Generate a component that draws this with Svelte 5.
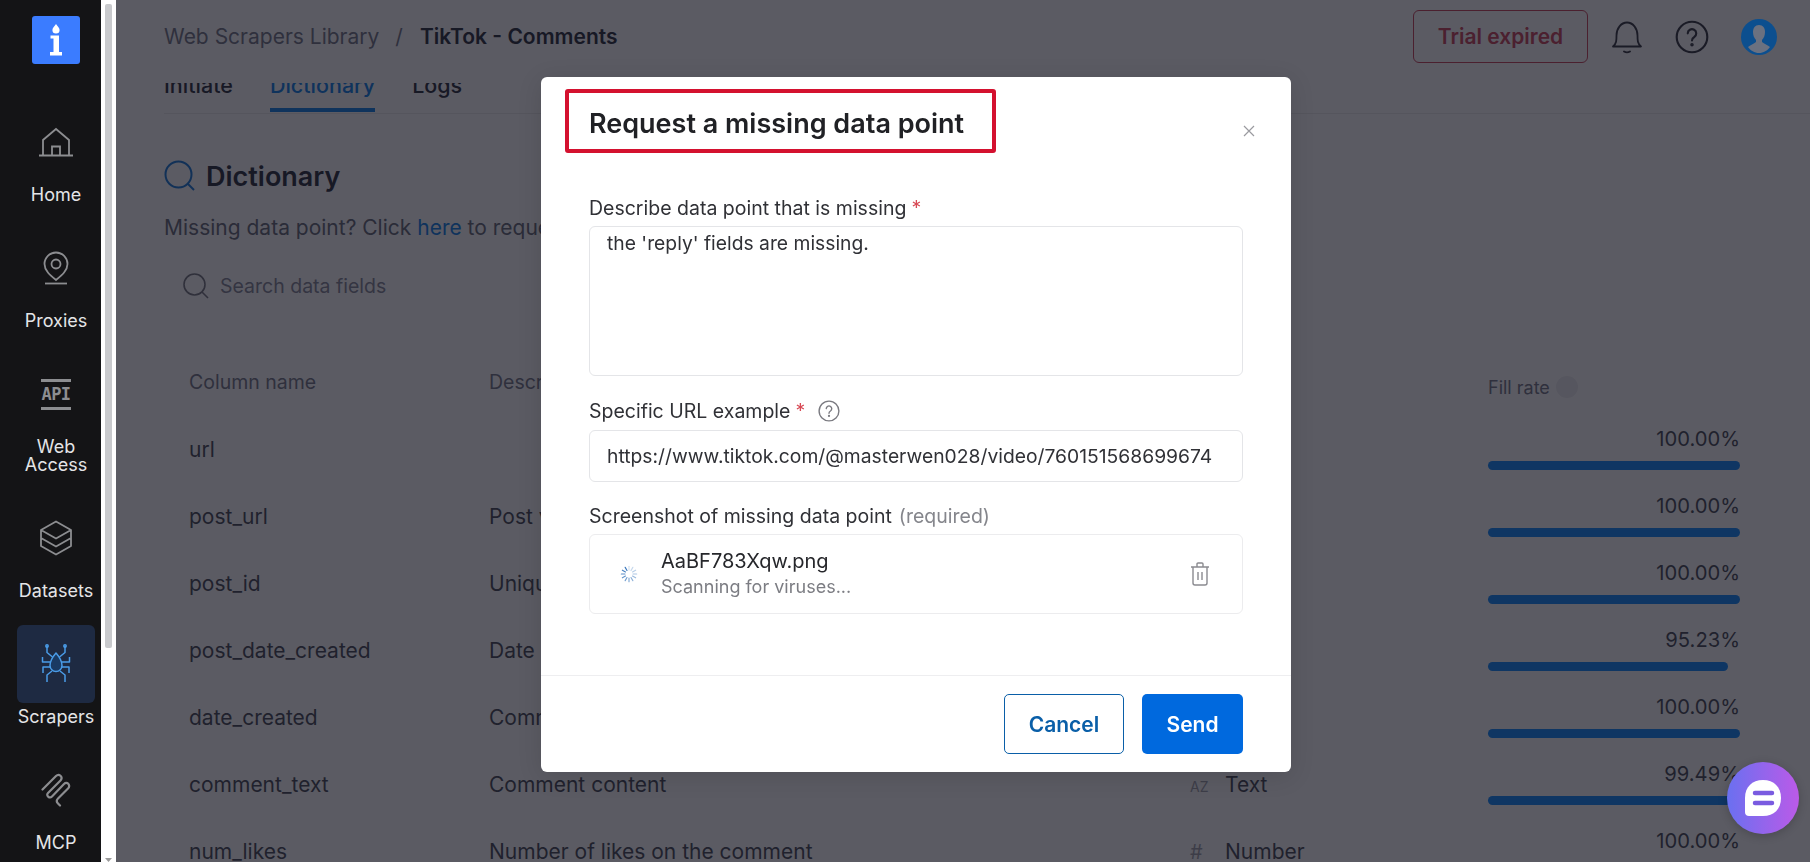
<script lang="ts">
  const rows = [
    { name: 'url', desc: '', type: 'Url', mark: '', fill: 100 },
    { name: 'post_url', desc: 'Post video URL', type: 'Url', mark: '', fill: 100 },
    { name: 'post_id', desc: 'Unique post ID', type: 'Text', mark: 'AZ', fill: 100 },
    { name: 'post_date_created', desc: 'Date created', type: 'Date', mark: '', fill: 95.23 },
    { name: 'date_created', desc: 'Comment date', type: 'Date', mark: '', fill: 100 },
    { name: 'comment_text', desc: 'Comment content', type: 'Text', mark: 'AZ', fill: 99.49 },
    { name: 'num_likes', desc: 'Number of likes on the comment', type: 'Number', mark: '#', fill: 100 },
  ]

  const ticks = Array.from({ length: 12 }, (_, i) => i)
  let reason = $state("the 'reply' fields are missing.")
  let url = $state('https://www.tiktok.com/@masterwen028/video/760151568699674')
</script>

{#snippet help(size)}
  <svg class="help" width={size} height={size} viewBox="0 0 24 24" fill="none" stroke="currentColor" stroke-width="1.5">
    <circle cx="12" cy="12" r="10.8" />
    <path d="M9 9.4a3 3 0 1 1 4.6 2.6c-1 .6-1.6 1.2-1.6 2.4" stroke-linecap="round" />
    <circle cx="12" cy="17.4" r=".5" fill="currentColor" />
  </svg>
{/snippet}

<div class="page">
  <aside class="sidebar">
    <div class="logo">
      <svg width="12" height="32" viewBox="0 0 12 32" fill="#fff">
        <path d="M6 0c.8 1.800 3.600 3.500 3.600 6a3.600 3.600 0 0 1-7.200 0C2.400 3.500 5.200 1.800 6 0z" />
        <path d="M.5 11.500h8.500v16.500H12v3.500H0V28h3.500V14.500H.5z" />
      </svg>
    </div>
    <nav class="nav">
      <a class="nav-item">
        <span class="nav-icon">
          <svg width="36" height="30" viewBox="0 0 36 30" fill="none" stroke="#8c8d90" stroke-width="1.800">
            <path d="M1 28.500h34M5 28.500V13L18 2l13 11v15.500M14 28.500v-9h8v9" />
          </svg>
        </span>
        <span class="nav-label">Home</span>
      </a>
      <a class="nav-item">
        <span class="nav-icon">
          <svg width="26" height="34" viewBox="0 0 26 34" fill="none" stroke="#8c8d90" stroke-width="1.800">
            <path d="M13 29C7 24 1.500 19.500 1.500 13a11.500 11.500 0 0 1 23 0c0 6.500-5.500 11-11.500 16z" />
            <circle cx="13" cy="13" r="4.500" />
            <path d="M2 32.500h22" />
          </svg>
        </span>
        <span class="nav-label">Proxies</span>
      </a>
      <a class="nav-item">
        <span class="nav-icon">
          <span class="api-mark">API</span>
        </span>
        <span class="nav-label">Web<br />Access</span>
      </a>
      <a class="nav-item">
        <span class="nav-icon">
          <svg width="34" height="36" viewBox="0 0 34 36" fill="none" stroke="#8c8d90" stroke-width="1.800" stroke-linejoin="round">
            <path d="M17 1.500 32 10v16l-15 8.500L2 26V10zM2 10l15 8.500L32 10M2 18l15 8.500L32 18" />
          </svg>
        </span>
        <span class="nav-label">Datasets</span>
      </a>
      <a class="nav-item active">
        <span class="nav-icon">
          <svg width="32" height="40" viewBox="0 0 32 40" fill="none" stroke="#4a9ce8" stroke-width="1.500" stroke-linejoin="round">
            <path d="M16 9c3.500 4 6 8 6 12.500a6 6 0 0 1-12 0C10 17 12.500 13 16 9z" fill="#1a3a63" />
            <path d="M12.500 13 7 8.500V2M19.500 13 25 8.500V2M10 18H2.500v-5M22 18h7.500v-5M10 23H3v6M22 23h7v6M12 27l-5 4v7M20 27l5 4v7" />
            <circle cx="7" cy="2" r="1.200" /><circle cx="25" cy="2" r="1.200" />
          </svg>
        </span>
        <span class="nav-label">Scrapers</span>
      </a>
      <a class="nav-item">
        <span class="nav-icon">
          <svg width="30" height="34" viewBox="0 0 30 34" fill="none" stroke="#8c8d90" stroke-width="2.200" stroke-linecap="round" stroke-linejoin="round">
            <path d="M1.500 16.500 15 3c3-3 7.500 1 4.500 4.500L7 20c-2.500 2.500 1.500 6 4 3.500L23 11c3-3 7 1 4 4.500L17 25.500c-2 2-1.500 3.500 0 5l2 2" />
          </svg>
        </span>
        <span class="nav-label">MCP</span>
      </a>
    </nav>
  </aside>

  <div class="scrollbar"><div class="thumb"></div><span class="arrow"></span></div>

  <main class="main">
    <header class="topbar">
      <div class="crumbs">
        <span class="crumb">Web Scrapers Library</span>
        <span class="sep">/</span>
        <span class="current">TikTok - Comments</span>
      </div>
      <div class="top-actions">
        <button class="trial">Trial expired</button>
        <svg class="bell" width="32" height="34" viewBox="0 0 32 34" fill="none" stroke="#272932" stroke-width="1.800">
          <path d="M2 26.500c3.500-3 3.500-6 3.500-11C5.500 8.500 10 2.500 16 2.500s10.500 6 10.500 13c0 5 0 8 3.500 11z" stroke-linejoin="round" />
          <path d="M13 31.500c2 1.200 4 1.200 6 0" stroke-linecap="round" />
        </svg>
        <span class="top-help">{@render help(34)}</span>
        <span class="avatar">
          <svg width="36" height="36" viewBox="0 0 36 36">
            <circle cx="18" cy="18" r="18" fill="#0c4f8f" />
            <path d="M18 6c4 0 6 3 6 7 0 3-1 6-3 8v2c2 2 6 3 8 5-2.500 3.500-6.500 6-11 6s-8.500-2.500-11-6c2-2 6-3 8-5v-2c-2-2-3-5-3-8 0-4 2-7 6-7z" fill="#6b7180" />
          </svg>
        </span>
      </div>
    </header>

    <div class="tabs">
      <span class="tab">Initiate</span>
      <span class="tab on">Dictionary</span>
      <span class="tab">Logs</span>
    </div>

    <section class="content">
      <h2 class="dict-title">
        <svg width="32" height="32" viewBox="0 0 32 32" fill="none" stroke="#0a72d8" stroke-width="2">
          <circle cx="14.500" cy="14.500" r="13" /><path d="m24 24 6 6" />
        </svg>
        Dictionary
      </h2>
      <p class="missing">Missing data point? Click <a>here</a> to request it</p>
      <div class="search">
        <svg width="26" height="26" viewBox="0 0 26 26" fill="none" stroke="#6e7079" stroke-width="1.600">
          <circle cx="11.500" cy="11.500" r="10.500" /><path d="m19 19 6 6" />
        </svg>
        <span>Search data fields</span>
      </div>

      <div class="table">
        <div class="row head">
          <span>Column name</span>
          <span>Description</span>
          <span>Type</span>
          <span class="fill-head">Fill rate <i class="dot"></i></span>
        </div>
        {#each rows as row}
          <div class="row">
            <span class="name">{row.name}</span>
            <span class="desc">{row.desc}</span>
            <span class="type"><em class:hash={row.mark === '#'}>{row.mark}</em>{row.type}</span>
            <div class="fill">
              <span class="pct">{row.fill.toFixed(2)}%</span>
              <div class="bar" style="width: {row.fill === 95.23 ? 95.23 : 100}%"></div>
            </div>
          </div>
        {/each}
      </div>
    </section>

    <div class="backdrop"></div>
  </main>

  <div class="modal">
    <div class="modal-head">
      <h1 class="modal-title">Request a missing data point</h1>
      <svg class="close" width="14" height="14" viewBox="0 0 14 14" stroke="#9a9a9f" stroke-width="1.200">
        <path d="m2 2 10 10M12 2 2 12" />
      </svg>
    </div>

    <div class="modal-body">
      <label class="field-label">Describe data point that is missing <b>*</b></label>
      <textarea class="reason" bind:value={reason}></textarea>

      <label class="field-label second">Specific URL example <b>*</b> <span class="label-help">{@render help(22)}</span></label>
      <input class="url" bind:value={url} />

      <label class="field-label third">Screenshot of missing data point <span class="req">(required)</span></label>
      <div class="file">
        <svg class="spinner" width="18" height="18" viewBox="0 0 20 20" stroke="#2d6fb8" stroke-width="1.300" stroke-linecap="round">
          {#each ticks as t}
            <path d="M10 1.500v4" transform="rotate({t * 30} 10 10)" opacity={0.2 + (t / 12) * 0.8} />
          {/each}
        </svg>
        <div class="file-text">
          <span class="file-name">AaBF783Xqw.png</span>
          <span class="file-status">Scanning for viruses...</span>
        </div>
        <svg class="trash" width="20" height="24" viewBox="0 0 20 24" fill="none" stroke="#8b8b90" stroke-width="1.400">
          <path d="M1 5h18M7 5V2a1 1 0 0 1 1-1h4a1 1 0 0 1 1 1v3M3 5v16a2 2 0 0 0 2 2h10a2 2 0 0 0 2-2V5M8 10v8M12 10v8" />
        </svg>
      </div>
    </div>

    <div class="modal-foot">
      <button class="btn cancel">Cancel</button>
      <button class="btn send">Send</button>
    </div>
  </div>

  <div class="chat">
    <svg width="38" height="38" viewBox="0 0 38 38">
      <path d="M19 1c11 0 18 7 18 18s-7 18-18 18H5c-2.500 0-4-1.500-4-4V19C1 8 8 1 19 1z" fill="#fff" />
      <path d="M11 14h17M11 24h17" stroke="#7a5be0" stroke-width="4.500" stroke-linecap="round" />
    </svg>
  </div>
</div>

<style>
  :global(body) {
    margin: 0;
    overflow: hidden;
    font-family: Inter, "Liberation Sans", sans-serif;
  }

  .page {
    display: flex;
    height: 100vh;
    overflow: hidden;
    background: #fff;
  }

  .sidebar {
    width: 101px;
    flex-shrink: 0;
    background: #141416;
    display: flex;
    flex-direction: column;
    align-items: center;
    padding: 16px 0 0 11px;
    box-sizing: border-box;
    overflow: hidden;
  }

  .logo {
    width: 48px;
    height: 48px;
    flex-shrink: 0;
    border-radius: 3px;
    background: #3b7cff;
    display: flex;
    align-items: center;
    justify-content: center;
  }

  .nav {
    margin-top: 39px;
    display: flex;
    flex-direction: column;
    gap: 25px;
  }

  .nav-item {
    display: flex;
    flex-direction: column;
    align-items: center;
    gap: 5px;
    color: #e4e5e7;
    font-size: 18px;
    line-height: 18px;
    text-align: center;
  }

  .nav-icon {
    width: 78px;
    height: 78px;
    border-radius: 6px;
    display: flex;
    align-items: center;
    justify-content: center;
  }

  .nav-item.active .nav-icon {
    background: #1e2a42;
  }

  .api-mark {
    width: 30px;
    border-top: 3px solid #8c8d90;
    border-bottom: 3px solid #8c8d90;
    color: #8c8d90;
    font-family: "DejaVu Sans Mono", monospace;
    font-weight: 700;
    font-size: 17px;
    line-height: 25px;
    letter-spacing: -0.5px;
    text-align: center;
  }

  .scrollbar {
    width: 15px;
    flex-shrink: 0;
    background: #fff;
    position: relative;
  }

  .thumb {
    width: 7px;
    height: 644px;
    margin: 4px 0 0 4px;
    border-radius: 2px;
    background: #c9cacd;
  }

  .arrow {
    position: absolute;
    left: 4px;
    bottom: 0;
    width: 7px;
    height: 4px;
    background: #9a9a9a;
    clip-path: polygon(0 0, 100% 0, 50% 100%);
  }

  .main {
    flex: 1;
    min-width: 0;
    position: relative;
    background: #fff;
    padding: 0 0 0 48px;
    overflow: hidden;
  }

  .backdrop {
    position: absolute;
    inset: 0;
    background: rgba(21, 22, 33, 0.7);
  }

  .topbar {
    height: 83px;
    box-sizing: border-box;
    padding: 0 33px 10px 0;
    display: flex;
    align-items: center;
    justify-content: space-between;
  }

  .crumbs {
    display: flex;
    align-items: center;
    font-size: 21px;
  }

  .crumb {
    color: #6c7080;
  }

  .sep {
    margin: 0 17px 0 16px;
    color: #6c7080;
  }

  .current {
    font-weight: 600;
    color: #1b2230;
  }

  .top-actions {
    display: flex;
    align-items: center;
  }

  .trial {
    width: 175px;
    height: 53px;
    border: 1px solid #c83a52;
    border-radius: 6px;
    background: #fff;
    color: #c83a52;
    font: 600 21px Inter, sans-serif;
  }

  .bell {
    margin-left: 23px;
  }

  .top-help {
    display: flex;
    margin-left: 32px;
    color: #272932;
  }

  .avatar {
    display: flex;
    margin-left: 32px;
    position: relative;
    z-index: 1;
  }

  .tabs {
    height: 30px;
    display: flex;
    gap: 37px;
    align-items: flex-start;
    overflow: hidden;
    border-bottom: 1px solid #e9eaec;
    font-size: 21.500px;
    font-weight: 500;
    color: #1b2230;
  }

  .tab {
    height: 41px;
    margin-top: -12px;
    box-sizing: border-box;
    line-height: 28px;
    flex-shrink: 0;
  }

  .tab.on {
    color: #0078e8;
    border-bottom: 4px solid #0078e8;
  }

  .content {
    padding-top: 46px;
  }

  .dict-title {
    display: flex;
    align-items: center;
    gap: 10px;
    margin: 0;
    height: 32px;
    font-size: 27px;
    font-weight: 600;
    color: #1b2230;
  }

  .missing {
    margin: 22px 0 0;
    font-size: 21px;
    line-height: 28px;
    color: #5d6170;
  }

  .missing a {
    color: #0078e8;
  }

  .search {
    display: flex;
    align-items: center;
    gap: 11px;
    margin: 31px 0 0 19px;
    font-size: 19.500px;
    color: #7d8090;
  }

  .table {
    margin-top: 71px;
    padding-left: 25px;
  }

  .row {
    display: grid;
    grid-template-columns: 300px 701px 298px 252px;
    height: 67px;
    align-items: center;
    font-size: 21px;
    color: #3b3f4c;
    white-space: nowrap;
  }

  .row.head {
    height: 46px;
    align-items: start;
    color: #6c7080;
    font-size: 19.500px;
  }

  .fill-head {
    display: flex;
    align-items: center;
    gap: 6px;
    margin-top: 6px;
    font-size: 18px;
  }

  .dot {
    width: 22px;
    height: 22px;
    border-radius: 50%;
    background: #eeeef0;
  }

  .type em {
    display: inline-block;
    width: 35px;
    font-style: normal;
    font-size: 14px;
    color: #9a9ca6;
  }

  .type em.hash {
    font-size: 20px;
  }

  .fill {
    display: flex;
    flex-direction: column;
    align-items: flex-end;
    gap: 10px;
    padding-bottom: 3px;
  }

  .pct {
    font-size: 20.200px;
    line-height: 24px;
    color: #3b3f4c;
  }

  .bar {
    height: 9px;
    border-radius: 5px;
    background: #0082ff;
    align-self: flex-start;
  }

  /* modal sits over the dimmed page */
  .modal {
    position: fixed;
    left: 541px;
    top: 77px;
    width: 750px;
    height: 695px;
    background: #fff;
    border-radius: 6px;
    display: flex;
    flex-direction: column;
    box-shadow: 0 4px 24px rgba(0, 0, 0, 0.12);
    color: #26272b;
  }

  .modal-head {
    position: relative;
    height: 76px;
    flex-shrink: 0;
    padding: 12px 0 0 24px;
    box-sizing: border-box;
  }

  .modal-title {
    display: inline-block;
    margin: 0;
    height: 64px;
    box-sizing: border-box;
    border: 4px solid #d4112f;
    border-radius: 3px;
    padding: 6px 28px 0 20px;
    font-size: 27px;
    font-weight: 600;
    line-height: 50px;
    white-space: nowrap;
    color: #202125;
  }

  .close {
    position: absolute;
    right: 35px;
    top: 47px;
  }

  .modal-body {
    flex: 1;
    padding: 43px 48px 0;
    display: flex;
    flex-direction: column;
  }

  .field-label {
    display: flex;
    align-items: center;
    gap: 5px;
    height: 24px;
    font-size: 19.500px;
    color: #303136;
  }

  .field-label b {
    color: #d84a55;
    font-weight: 400;
  }

  .second {
    margin-top: 23px;
  }

  .label-help {
    display: flex;
    margin-left: 8px;
    color: #7a7a80;
  }

  .third {
    margin-top: 22px;
  }

  .req {
    margin-left: 2px;
    color: #85868c;
  }

  .reason,
  .url {
    display: block;
    width: 100%;
    box-sizing: border-box;
    margin: 0;
    border: 1px solid #e4e5e8;
    border-radius: 6px;
    outline: none;
    background: #fff;
    color: #303136;
    font: 19.300px/24px Inter, sans-serif;
  }

  .reason {
    height: 150px;
    margin-top: 6px;
    padding: 4px 17px;
    resize: none;
  }

  .url {
    height: 52px;
    margin-top: 7px;
    padding: 0 17px;
  }

  .file {
    height: 80px;
    margin-top: 6px;
    box-sizing: border-box;
    border: 1px solid #ececee;
    border-radius: 6px;
    display: flex;
    align-items: center;
    padding: 0 32px 0 30px;
  }

  .file-text {
    display: flex;
    flex-direction: column;
    gap: 2px;
    margin-left: 23px;
    flex: 1;
  }

  .file-name {
    font-size: 20px;
    line-height: 24px;
    color: #26272b;
  }

  .file-status {
    font-size: 18px;
    line-height: 24px;
    color: #7c7d83;
  }

  .modal-foot {
    height: 97px;
    flex-shrink: 0;
    box-sizing: border-box;
    border-top: 1px solid #eeeef0;
    padding: 18px 48px 0 0;
    display: flex;
    justify-content: flex-end;
    gap: 18px;
  }

  .btn {
    height: 60px;
    border-radius: 5px;
    font: 600 21px Inter, sans-serif;
  }

  .cancel {
    width: 120px;
    background: #fff;
    border: 1px solid #0a5fa8;
    color: #0a5fa8;
  }

  .send {
    width: 101px;
    background: #0069de;
    border: none;
    color: #fff;
  }

  .chat {
    position: fixed;
    left: 1727px;
    top: 762px;
    width: 72px;
    height: 72px;
    border-radius: 50%;
    background: linear-gradient(90deg, #6a70f0, #bb5ae8);
    display: flex;
    align-items: center;
    justify-content: center;
    box-shadow: 0 2px 10px rgba(0, 0, 0, 0.2);
  }
</style>
